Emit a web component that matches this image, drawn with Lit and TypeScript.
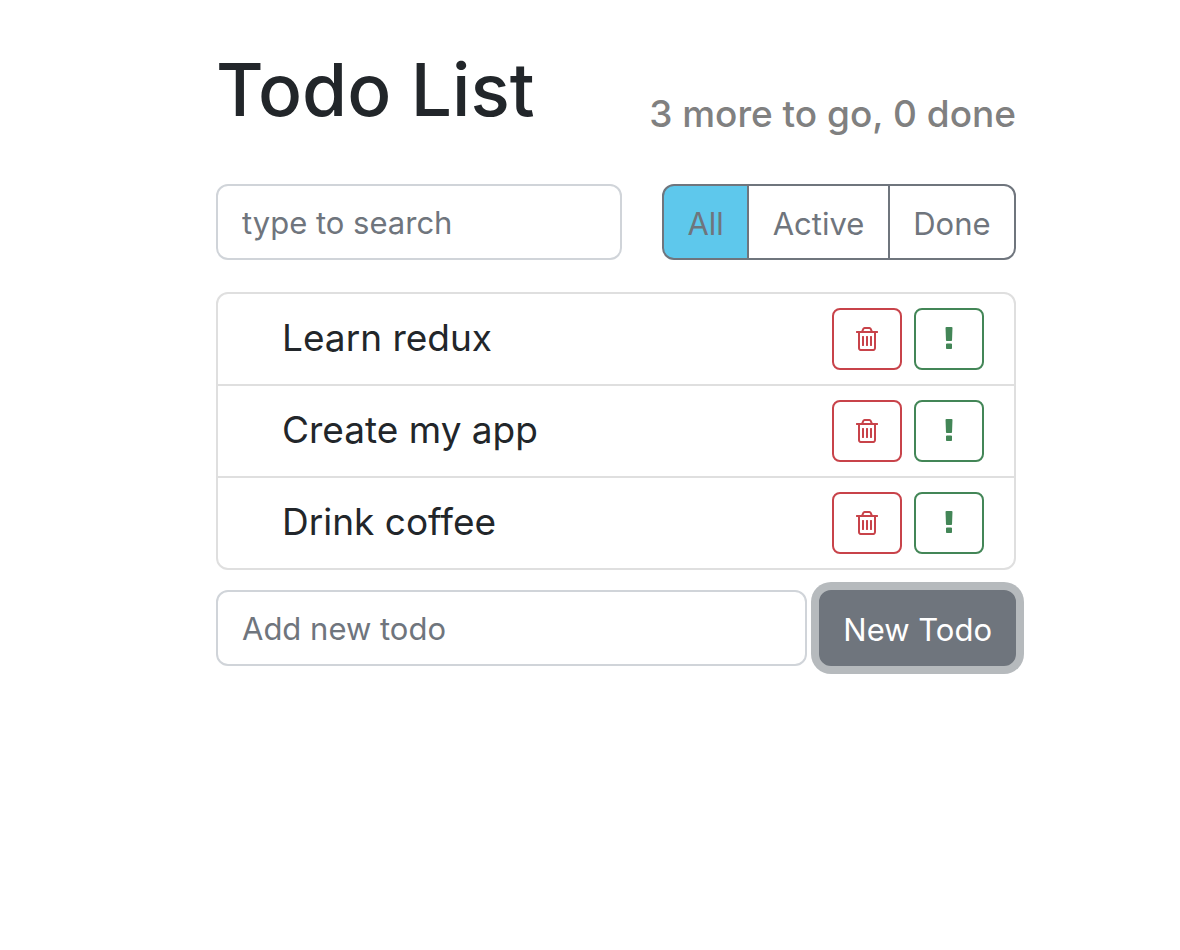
import { LitElement, html, css, svg } from "lit";
import { customElement, state } from "lit/decorators.js";
import { classMap } from "lit/directives/class-map.js";

interface Todo {
  id: number;
  label: string;
  done: boolean;
  important: boolean;
}

type Filter = "All" | "Active" | "Done";

const trashIcon = svg`<path d="M704 736v576q0 14-9 23t-23 9h-64q-14 0-23-9t-9-23v-576q0-14 9-23t23-9h64q14 0 23 9t9 23zm256 0v576q0 14-9 23t-23 9h-64q-14 0-23-9t-9-23v-576q0-14 9-23t23-9h64q14 0 23 9t9 23zm256 0v576q0 14-9 23t-23 9h-64q-14 0-23-9t-9-23v-576q0-14 9-23t23-9h64q14 0 23 9t9 23zm128 724v-948h-896v948q0 22 7 40.5t14.5 27 10.5 8.5h832q3 0 10.5-8.5t14.5-27 7-40.5zm-672-1076h448l-48-117q-7-9-17-11h-317q-10 2-17 11zm928 32v64q0 14-9 23t-23 9h-96v948q0 83-47 143.5t-113 60.5h-832q-66 0-113-58.5t-47-141.5v-952h-96q-14 0-23-9t-9-23v-64q0-14 9-23t23-9h309l70-167q15-37 54-63t79-26h320q40 0 79 26t54 63l70 167h309q14 0 23 9t9 23z" />`;

const markIcon = svg`<path d="M1088 1248v224q0 26-19 45t-45 19h-256q-26 0-45-19t-19-45v-224q0-26 19-45t45-19h256q26 0 45 19t19 45zm30-1056l-28 768q-1 26-20.5 45t-45.5 19h-256q-26 0-45.5-19t-20.5-45l-28-768q-1-26 17.5-45t44.5-19h320q26 0 44.5 19t17.5 45z" />`;

@customElement("app-root")
export class AppRoot extends LitElement {
  static styles = css`
    :host {
      display: block;
      box-sizing: border-box;
      padding: 42px 164px 44px 216px;
      background: #fff;
      color: #22262a;
      font-family: Inter, "Liberation Sans", sans-serif;
      font-size: 31px;
      line-height: 48px;
    }
    *,
    *::before {
      box-sizing: border-box;
    }
    input,
    button {
      margin: 0;
      font: inherit;
    }
    .top {
      display: flex;
      align-items: flex-end;
      justify-content: space-between;
      margin-bottom: 46px;
    }
    .title {
      margin: 0;
      font-size: 73px;
      line-height: 96px;
      font-weight: 500;
    }
    .summary {
      margin: 0;
      font-size: 37px;
      line-height: 48px;
      font-weight: 500;
      color: #808080;
    }
    .bar {
      display: flex;
      gap: 40px;
      margin-bottom: 32px;
    }
    .field {
      flex: 1;
      min-width: 0;
      height: 76px;
      padding: 12px 24px;
      border: 2px solid #d0d4d9;
      border-radius: 12px;
      background: #fff;
      color: #22262a;
      outline: none;
    }
    .field::placeholder {
      color: #6f757d;
      opacity: 1;
    }
    .filters {
      display: flex;
      width: 354px;
    }
    .filter {
      flex: 1 1 auto;
      height: 76px;
      padding: 14px 20px 12px;
      border: 2px solid #6f757d;
      background: #fff;
      color: #6f757d;
    }
    .filter + .filter {
      margin-left: -2px;
    }
    .filter:first-child {
      border-radius: 12px 0 0 12px;
    }
    .filter:last-child {
      border-radius: 0 12px 12px 0;
    }
    .filter.selected {
      background: #5ec8ec;
    }
    .list {
      margin: 0 0 20px;
      padding: 0;
      list-style: none;
      border: 2px solid #dfdfdf;
      border-radius: 12px;
    }
    .item {
      display: flex;
      align-items: center;
      gap: 12px;
      padding: 14px 30px 14px 64px;
    }
    .item + .item {
      border-top: 2px solid #dfdfdf;
    }
    .label {
      flex: 1;
      padding-bottom: 2px;
      font-size: 37px;
      line-height: 60px;
    }
    .label.done {
      text-decoration: line-through;
    }
    .label.important {
      font-weight: 700;
      color: #5b9bd5;
    }
    .action {
      display: flex;
      align-items: center;
      justify-content: center;
      width: 70px;
      height: 62px;
      padding: 0;
      border: 2px solid currentColor;
      border-radius: 8px;
      background: #fff;
    }
    .action.delete {
      color: #c8434a;
    }
    .action.mark {
      color: #438657;
    }
    .icon {
      width: 28px;
      height: 28px;
      fill: currentColor;
    }
    .add {
      display: flex;
      gap: 12px;
    }
    .submit {
      height: 76px;
      padding: 14px 22px 12px;
      border: 2px solid #6f757d;
      border-radius: 12px;
      background: #6f757d;
      color: #fff;
      outline: none;
      box-shadow: 0 0 0 8px #b6babd;
    }
  `;

  @state() private todos: Todo[] = [
    { id: 1, label: "Learn redux", done: false, important: false },
    { id: 2, label: "Create my app", done: false, important: false },
    { id: 3, label: "Drink coffee", done: false, important: false },
  ];
  @state() private filter: Filter = "All";
  @state() private term = "";

  private get visible() {
    return this.todos.filter(
      (t) =>
        t.label.toLowerCase().includes(this.term.toLowerCase()) &&
        (this.filter === "All" || (this.filter === "Done") === t.done)
    );
  }

  private toggle(id: number, key: "done" | "important") {
    this.todos = this.todos.map((t) => (t.id === id ? { ...t, [key]: !t[key] } : t));
  }

  private add(e: Event) {
    e.preventDefault();
    const input = (e.target as HTMLFormElement).elements.namedItem("todo") as HTMLInputElement;
    if (!input.value.trim()) return;
    this.todos = [...this.todos, { id: Date.now(), label: input.value.trim(), done: false, important: false }];
    input.value = "";
  }

  render() {
    const done = this.todos.filter((t) => t.done).length;
    const filters: Filter[] = ["All", "Active", "Done"];
    return html`
      <header class="top">
        <h1 class="title">Todo List</h1>
        <h2 class="summary">${this.todos.length - done} more to go, ${done} done</h2>
      </header>
      <div class="bar">
        <input
          class="field"
          type="text"
          aria-label="type to search"
          placeholder="type to search"
          @input=${(e: Event) => (this.term = (e.target as HTMLInputElement).value)}
        />
        <div class="filters" role="group">
          ${filters.map(
            (f) => html`<button
              type="button"
              class=${classMap({ filter: true, selected: f === this.filter })}
              @click=${() => (this.filter = f)}
            >${f}</button>`
          )}
        </div>
      </div>
      <ul class="list">
        ${this.visible.map(
          (t) => html`<li class="item">
            <span
              class=${classMap({ label: true, done: t.done, important: t.important })}
              @click=${() => this.toggle(t.id, "done")}
            >${t.label}</span>
            <button
              type="button"
              class="action delete"
              aria-label="Delete"
              @click=${() => (this.todos = this.todos.filter((o) => o.id !== t.id))}
            ><svg class="icon" viewBox="0 0 1792 1792" aria-hidden="true">${trashIcon}</svg></button>
            <button
              type="button"
              class="action mark"
              aria-label="Important"
              @click=${() => this.toggle(t.id, "important")}
            ><svg class="icon" viewBox="0 0 1792 1792" aria-hidden="true">${markIcon}</svg></button>
          </li>`
        )}
      </ul>
      <form class="add" @submit=${this.add}>
        <input class="field" name="todo" type="text" aria-label="Add new todo" placeholder="Add new todo" />
        <button class="submit" type="submit">New Todo</button>
      </form>
    `;
  }
}
